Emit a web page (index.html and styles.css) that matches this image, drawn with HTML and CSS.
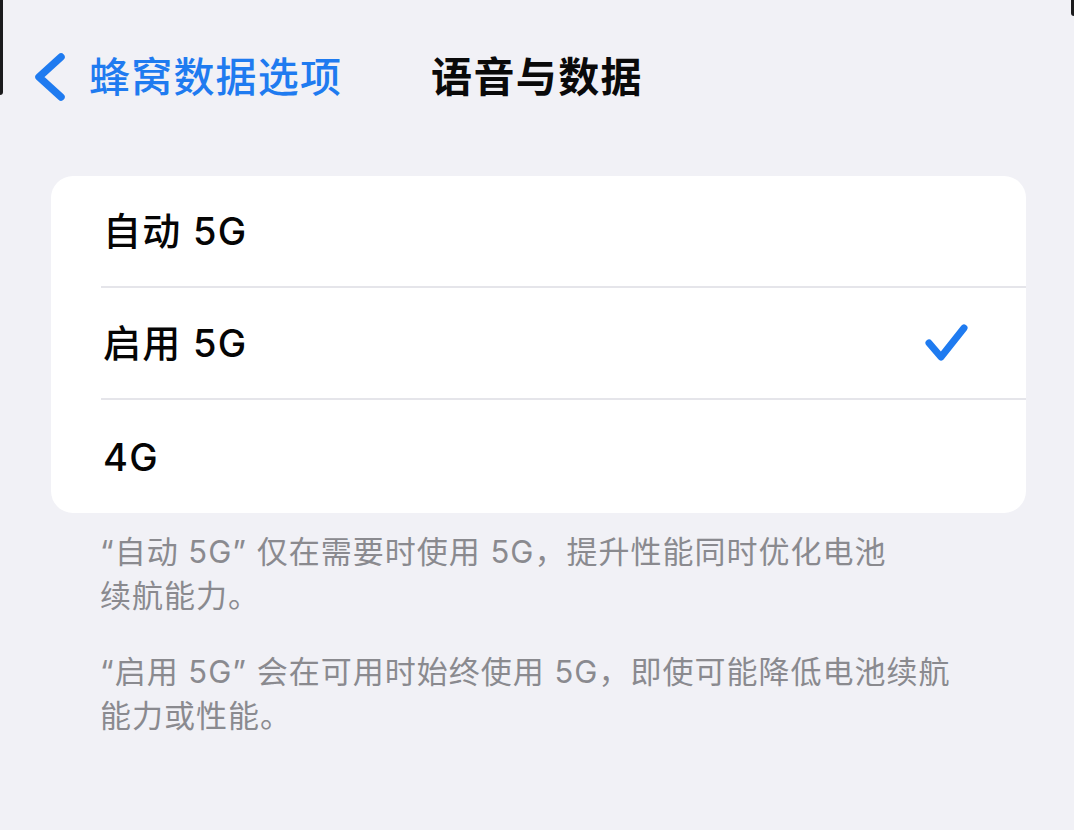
FILE: index.html
```html
<!DOCTYPE html>
<html lang="zh-CN">
<head>
<meta charset="utf-8">
<title>语音与数据</title>
<link rel="stylesheet" href="styles.css">
</head>
<body>
<div class="screen">
  <div class="bezel bezel-left"></div>
  <div class="bezel bezel-right"></div>
  <header class="nav">
    <div class="back">
      <svg class="chevron" width="40" height="56" viewBox="0 0 40 56" aria-hidden="true">
        <path d="M31 8 L9 28 L31 48" fill="none" stroke="currentColor" stroke-width="7.5" stroke-linecap="round" stroke-linejoin="round"/>
      </svg>
      <span class="back-label">蜂窝数据选项</span>
    </div>
    <h1 class="title">语音与数据</h1>
    <div class="spacer"></div>
  </header>

  <section class="card">
    <div class="row"><span class="label">自动 5G</span></div>
    <div class="row"><span class="label">启用 5G</span>
      <svg class="check" width="48" height="44" viewBox="0 0 48 44" aria-hidden="true">
        <path d="M7 22 L19 36 L42 7" fill="none" stroke="currentColor" stroke-width="7" stroke-linecap="round" stroke-linejoin="round"/>
      </svg>
    </div>
    <div class="row"><span class="label">4G</span></div>
  </section>

  <footer class="notes">
    <p>“自动 5G” 仅在需要时使用 5G，提升性能同时优化电池<br>续航能力。</p>
    <p>“启用 5G” 会在可用时始终使用 5G，即使可能降低电池续航<br>能力或性能。</p>
  </footer>
</div>
</body>
</html>
```

FILE: styles.css
```css
html, body {
  margin: 0;
  padding: 0;
  background: #f1f1f6;
}

body {
  font-family: "Inter", "Noto Sans CJK SC", "Noto Sans", "Liberation Sans", sans-serif;
  color: #000;
}

.screen {
  position: relative;
  width: 1074px;
  height: 830px;
  overflow: hidden;
  background: #f1f1f6;
}

.bezel {
  position: absolute;
  top: 0;
  background: #1b1b1d;
}

.bezel-left {
  left: 0;
  width: 3px;
  height: 95px;
  border-bottom-right-radius: 3px;
}

.bezel-right {
  right: 0;
  width: 3px;
  height: 16px;
  border-bottom-left-radius: 3px;
}

.nav {
  display: grid;
  grid-template-columns: 1fr auto 1fr;
  align-items: center;
  height: 154px;
}

.back {
  display: flex;
  align-items: center;
  padding-left: 30px;
  color: #1f7bf0;
}

.chevron {
  display: block;
  flex: none;
}

.back-label {
  margin-left: 19px;
  font-size: 41px;
  font-weight: 500;
  line-height: 1;
  letter-spacing: 1.2px;
}

.title {
  margin: 0;
  font-size: 41px;
  font-weight: 700;
  line-height: 1;
  letter-spacing: 1.4px;
  color: #0a0a0a;
}

.card {
  margin: 22px 48px 0 51px;
  background: #ffffff;
  border-radius: 22px;
  overflow: hidden;
}

.row {
  display: flex;
  align-items: center;
  justify-content: space-between;
  height: 112px;
  margin-left: 50px;
  padding-left: 2px;
  padding-right: 56px;
  border-bottom: 2px solid #e5e5ea;
  box-sizing: border-box;
}

.row:last-child {
  border-bottom: none;
  height: 113px;
}

.label {
  font-size: 38px;
  font-weight: 500;
  line-height: 1;
  letter-spacing: 1.3px;
  color: #050505;
}

.check {
  display: block;
  color: #1f7bf0;
}

.notes {
  padding: 17px 0 0 100px;
}

.notes p {
  margin: 0 0 32px;
  font-size: 31px;
  line-height: 44px;
  letter-spacing: 1px;
  color: #8a8a8f;
  white-space: nowrap;
}
```
